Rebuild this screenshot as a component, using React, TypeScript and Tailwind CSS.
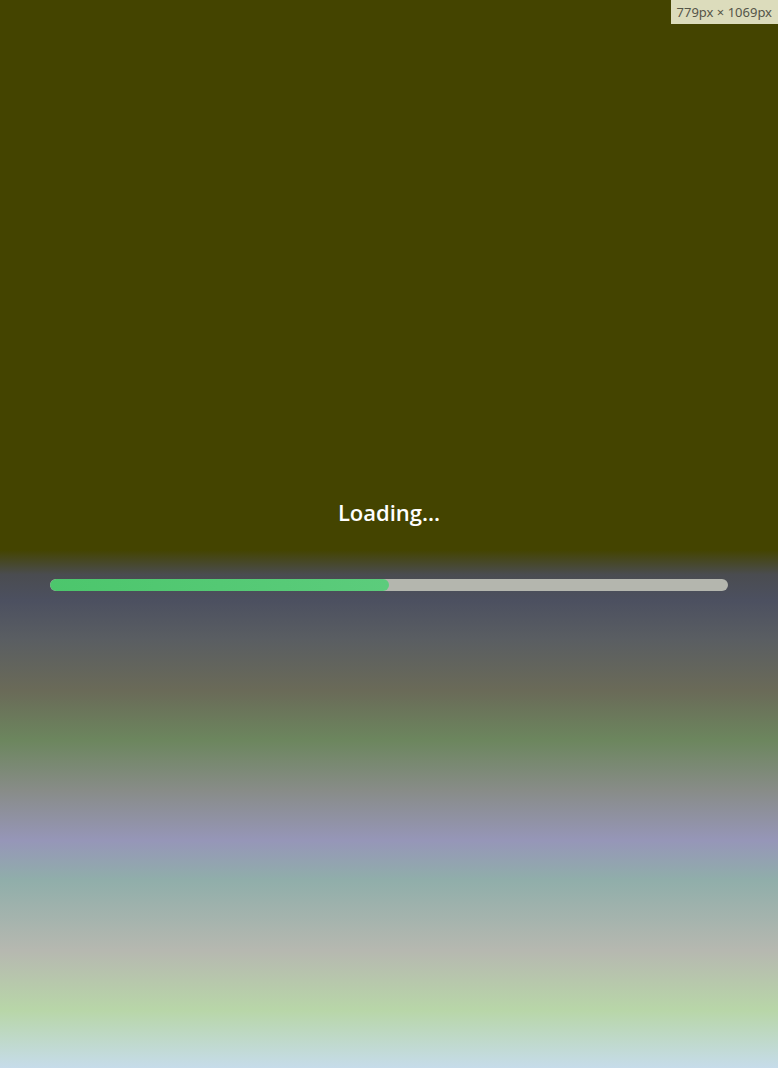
import React from "react";

export default function App() {
  const progress = 50;
  return (
    <div className="relative w-full h-[1068px] overflow-hidden flex flex-col font-['Open_Sans','Noto_Sans',sans-serif] bg-[linear-gradient(to_bottom,#444400_0%,#444400_51.5%,#4a4c50_53.8%,#4c5060_56.2%,#5a5e62_59.9%,#6a6a58_64.6%,#6c865e_69.3%,#888c88_74%,#9696b8_78.7%,#90aeaa_82.4%,#b6b8b0_89%,#b8d6a8_94.6%,#c6dcea_100%)]">
      <div className="pt-[497px] text-center text-white text-[22px] leading-[30px] font-semibold">
        Loading...
      </div>
      <div className="mt-[52px] mx-[50px] h-[12px] rounded-full bg-[#b4b6ae] overflow-hidden">
        <div
          className="h-full rounded-full bg-[linear-gradient(to_right,#4cc66c,#5ccc7c)]"
          style={{ width: `${progress}%` }}
        />
      </div>
      <div className="absolute top-0 right-0 px-[6px] h-[24px] leading-[24px] bg-[#dcdcbc] text-[#555548] text-[13px] font-['Noto_Sans',sans-serif]">
        779px × 1069px
      </div>
    </div>
  );
}
